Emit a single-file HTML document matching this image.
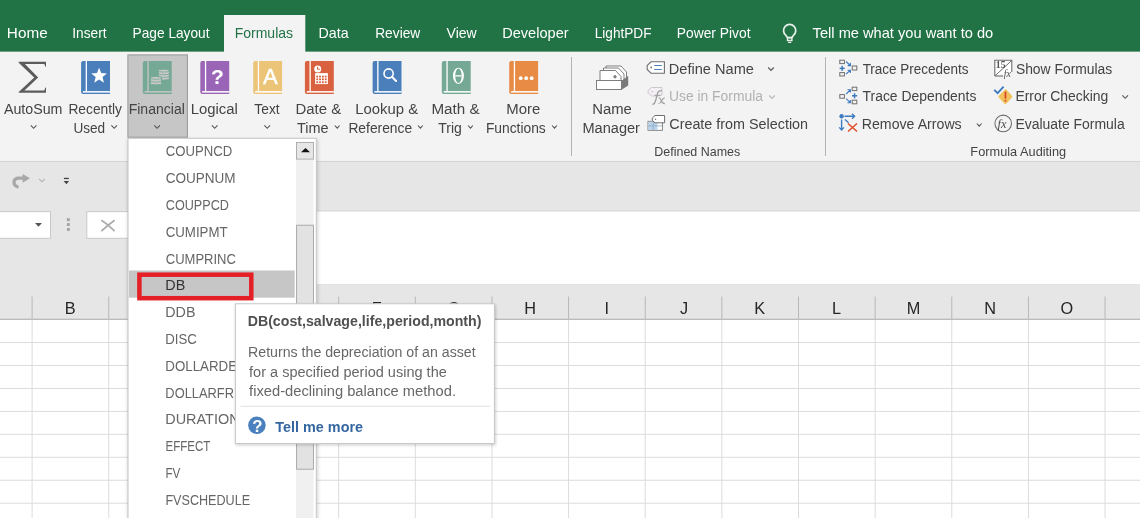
<!DOCTYPE html>
<html><head><meta charset="utf-8"><style>
html,body{margin:0;padding:0;width:1140px;height:518px;overflow:hidden;background:#fff}
svg{display:block;will-change:transform}
text{font-family:"Liberation Sans", sans-serif;white-space:pre}
</style></head><body>
<svg width="1140" height="518" viewBox="0 0 1140 518">
<rect x="0" y="0" width="1140" height="518" fill="#ffffff"/>
<rect x="0" y="0" width="1140" height="51.8" fill="#217346"/>
<rect x="0" y="51.8" width="1140" height="110" fill="#f3f3f3"/>
<rect x="224" y="15" width="81.3" height="37" fill="#f3f3f3"/>
<rect x="0" y="161" width="1140" height="1" fill="#d4d4d4"/>
<rect x="0" y="162" width="1140" height="49.5" fill="#e6e6e6"/>
<rect x="0" y="211.5" width="1140" height="73" fill="#ffffff"/>
<rect x="0" y="205" width="250" height="80" fill="#e6e6e6"/>
<rect x="-1" y="211.6" width="51.5" height="26.7" fill="#ffffff" stroke="#c8c8c8" stroke-width="1"/>
<path d="M35 223 L42 223 L38.5 226.8 Z" fill="#555"/>
<g fill="#a4a4a4"><rect x="66.9" y="218.2" width="2.9" height="2.9"/><rect x="66.9" y="223.1" width="2.9" height="2.9"/><rect x="66.9" y="228.0" width="2.9" height="2.9"/></g>
<rect x="86.8" y="211.6" width="60" height="26.7" fill="#ffffff" stroke="#c8c8c8" stroke-width="1"/>
<path d="M101.3 220.2 Q107 223.5 114.6 231.2 M114.6 220.2 Q108 225 101.3 231.2" fill="none" stroke="#acacac" stroke-width="1.7"/>
<rect x="250" y="284.3" width="890" height="1" fill="#d4d4d4"/>
<rect x="250" y="210.4" width="890" height="1" fill="#d8d8d8"/>
<rect x="0" y="284.8" width="1140" height="34.5" fill="#e6e6e6"/>
<rect x="0" y="318.77" width="1140" height="1" fill="#a9a9a9"/>
<path d="M18.6 187.2 Q14.2 186.2 14 182.5 Q14 178.2 19 178.2 L23.5 178.2" fill="none" stroke="#a8a8a8" stroke-width="3.3"/>
<path d="M22.6 173.9 L30 178.2 L22.6 182.8 Z" fill="#a8a8a8"/>
<path d="M39.20 179.00 L42.00 181.80 L44.80 179.00" fill="none" stroke="#b4b4b4" stroke-width="1.1"/>
<rect x="63.9" y="177.8" width="4.9" height="1.3" fill="#444"/><path d="M63.7 181 L69.1 181 L66.4 184.2 Z" fill="#444"/>
<rect x="31.60" y="296.5" width="1" height="22.5" fill="#b8b8b8"/><rect x="31.60" y="319.8" width="1" height="200" fill="#dcdcdc"/><rect x="108.24" y="296.5" width="1" height="22.5" fill="#b8b8b8"/><rect x="108.24" y="319.8" width="1" height="200" fill="#dcdcdc"/><rect x="184.88" y="296.5" width="1" height="22.5" fill="#b8b8b8"/><rect x="184.88" y="319.8" width="1" height="200" fill="#dcdcdc"/><rect x="261.52" y="296.5" width="1" height="22.5" fill="#b8b8b8"/><rect x="261.52" y="319.8" width="1" height="200" fill="#dcdcdc"/><rect x="338.16" y="296.5" width="1" height="22.5" fill="#b8b8b8"/><rect x="338.16" y="319.8" width="1" height="200" fill="#dcdcdc"/><rect x="414.80" y="296.5" width="1" height="22.5" fill="#b8b8b8"/><rect x="414.80" y="319.8" width="1" height="200" fill="#dcdcdc"/><rect x="491.44" y="296.5" width="1" height="22.5" fill="#b8b8b8"/><rect x="491.44" y="319.8" width="1" height="200" fill="#dcdcdc"/><rect x="568.08" y="296.5" width="1" height="22.5" fill="#b8b8b8"/><rect x="568.08" y="319.8" width="1" height="200" fill="#dcdcdc"/><rect x="644.72" y="296.5" width="1" height="22.5" fill="#b8b8b8"/><rect x="644.72" y="319.8" width="1" height="200" fill="#dcdcdc"/><rect x="721.36" y="296.5" width="1" height="22.5" fill="#b8b8b8"/><rect x="721.36" y="319.8" width="1" height="200" fill="#dcdcdc"/><rect x="798.00" y="296.5" width="1" height="22.5" fill="#b8b8b8"/><rect x="798.00" y="319.8" width="1" height="200" fill="#dcdcdc"/><rect x="874.64" y="296.5" width="1" height="22.5" fill="#b8b8b8"/><rect x="874.64" y="319.8" width="1" height="200" fill="#dcdcdc"/><rect x="951.28" y="296.5" width="1" height="22.5" fill="#b8b8b8"/><rect x="951.28" y="319.8" width="1" height="200" fill="#dcdcdc"/><rect x="1027.92" y="296.5" width="1" height="22.5" fill="#b8b8b8"/><rect x="1027.92" y="319.8" width="1" height="200" fill="#dcdcdc"/><rect x="1104.56" y="296.5" width="1" height="22.5" fill="#b8b8b8"/><rect x="1104.56" y="319.8" width="1" height="200" fill="#dcdcdc"/><rect x="1181.20" y="296.5" width="1" height="22.5" fill="#b8b8b8"/><rect x="1181.20" y="319.8" width="1" height="200" fill="#dcdcdc"/><rect x="0" y="342.05" width="1140" height="1" fill="#dcdcdc"/><rect x="0" y="365.00" width="1140" height="1" fill="#dcdcdc"/><rect x="0" y="387.95" width="1140" height="1" fill="#dcdcdc"/><rect x="0" y="410.90" width="1140" height="1" fill="#dcdcdc"/><rect x="0" y="433.85" width="1140" height="1" fill="#dcdcdc"/><rect x="0" y="456.80" width="1140" height="1" fill="#dcdcdc"/><rect x="0" y="479.75" width="1140" height="1" fill="#dcdcdc"/><rect x="0" y="502.70" width="1140" height="1" fill="#dcdcdc"/>
<text x="64.76" y="314.30" font-size="16.3" fill="#262626">B</text>
<text x="141.07" y="314.30" font-size="16.3" fill="#262626">C</text>
<text x="217.55" y="314.30" font-size="16.3" fill="#262626">D</text>
<text x="294.59" y="314.30" font-size="16.3" fill="#262626">E</text>
<text x="371.64" y="314.30" font-size="16.3" fill="#262626">F</text>
<text x="447.47" y="314.30" font-size="16.3" fill="#262626">G</text>
<text x="524.35" y="314.30" font-size="16.3" fill="#262626">H</text>
<text x="604.62" y="314.30" font-size="16.3" fill="#262626">I</text>
<text x="679.91" y="314.30" font-size="16.3" fill="#262626">J</text>
<text x="754.15" y="314.30" font-size="16.3" fill="#262626">K</text>
<text x="831.89" y="314.30" font-size="16.3" fill="#262626">L</text>
<text x="906.65" y="314.30" font-size="16.3" fill="#262626">M</text>
<text x="984.19" y="314.30" font-size="16.3" fill="#262626">N</text>
<text x="1060.42" y="314.30" font-size="16.3" fill="#262626">O</text>
<rect x="571" y="57" width="1" height="99" fill="#b4b4b4"/>
<rect x="825" y="57" width="1" height="99" fill="#b4b4b4"/>
<rect x="127.9" y="54.9" width="59.5" height="82.3" fill="#c6c6c6" stroke="#9c9c9c" stroke-width="1.1"/>
<text x="6.88" y="38.10" font-size="15.0" fill="#ffffff" textLength="40.75" lengthAdjust="spacingAndGlyphs">Home</text>
<text x="72.26" y="38.10" font-size="15.0" fill="#ffffff" textLength="34.38" lengthAdjust="spacingAndGlyphs">Insert</text>
<text x="132.60" y="38.10" font-size="15.0" fill="#ffffff" textLength="76.93" lengthAdjust="spacingAndGlyphs">Page Layout</text>
<text x="234.68" y="38.10" font-size="15.0" fill="#217346" textLength="58.41" lengthAdjust="spacingAndGlyphs">Formulas</text>
<text x="318.56" y="38.10" font-size="15.0" fill="#ffffff" textLength="30.08" lengthAdjust="spacingAndGlyphs">Data</text>
<text x="375.20" y="38.10" font-size="15.0" fill="#ffffff" textLength="45.06" lengthAdjust="spacingAndGlyphs">Review</text>
<text x="446.60" y="38.10" font-size="15.0" fill="#ffffff" textLength="30.16" lengthAdjust="spacingAndGlyphs">View</text>
<text x="502.24" y="38.10" font-size="15.0" fill="#ffffff" textLength="66.35" lengthAdjust="spacingAndGlyphs">Developer</text>
<text x="594.71" y="38.10" font-size="15.0" fill="#ffffff" textLength="56.78" lengthAdjust="spacingAndGlyphs">LightPDF</text>
<text x="676.79" y="38.10" font-size="15.0" fill="#ffffff" textLength="73.74" lengthAdjust="spacingAndGlyphs">Power Pivot</text>
<text x="812.61" y="38.10" font-size="15.0" fill="#ffffff" textLength="180.59" lengthAdjust="spacingAndGlyphs">Tell me what you want to do</text>
<path d="M787.4 37.6 L785.73 35.22 A6.1 6.1 0 1 1 793.57 35.22 L791.9 37.6 Z" fill="none" stroke="#e8f0ea" stroke-width="1.7" stroke-linejoin="round"/>
<rect x="787.5" y="37.6" width="4.4" height="2.9" fill="none" stroke="#e8f0ea" stroke-width="1.4"/><rect x="788.1" y="41.8" width="3.2" height="1.2" fill="#e8f0ea"/>
<text x="3.90" y="113.80" font-size="15.4" fill="#444444" textLength="58.50" lengthAdjust="spacingAndGlyphs">AutoSum</text>
<text x="68.40" y="113.80" font-size="15.4" fill="#444444" textLength="53.60" lengthAdjust="spacingAndGlyphs">Recently</text>
<text x="73.38" y="132.60" font-size="15.4" fill="#444444" textLength="31.75" lengthAdjust="spacingAndGlyphs">Used</text>
<text x="128.68" y="113.80" font-size="15.4" fill="#444444" textLength="56.20" lengthAdjust="spacingAndGlyphs">Financial</text>
<text x="190.71" y="113.80" font-size="15.4" fill="#444444" textLength="47.22" lengthAdjust="spacingAndGlyphs">Logical</text>
<text x="254.32" y="113.80" font-size="15.4" fill="#444444" textLength="25.32" lengthAdjust="spacingAndGlyphs">Text</text>
<text x="295.50" y="113.80" font-size="15.4" fill="#444444" textLength="45.67" lengthAdjust="spacingAndGlyphs">Date &amp;</text>
<text x="296.91" y="132.60" font-size="15.4" fill="#444444" textLength="31.58" lengthAdjust="spacingAndGlyphs">Time</text>
<text x="355.21" y="113.80" font-size="15.4" fill="#444444" textLength="62.87" lengthAdjust="spacingAndGlyphs">Lookup &amp;</text>
<text x="348.39" y="132.60" font-size="15.4" fill="#444444" textLength="63.77" lengthAdjust="spacingAndGlyphs">Reference</text>
<text x="431.38" y="113.80" font-size="15.4" fill="#444444" textLength="48.20" lengthAdjust="spacingAndGlyphs">Math &amp;</text>
<text x="438.22" y="132.60" font-size="15.4" fill="#444444" textLength="23.64" lengthAdjust="spacingAndGlyphs">Trig</text>
<text x="506.21" y="113.80" font-size="15.4" fill="#444444" textLength="34.01" lengthAdjust="spacingAndGlyphs">More</text>
<text x="485.89" y="132.60" font-size="15.4" fill="#444444" textLength="59.89" lengthAdjust="spacingAndGlyphs">Functions</text>
<text x="592.21" y="114.00" font-size="15.4" fill="#444444" textLength="39.60" lengthAdjust="spacingAndGlyphs">Name</text>
<text x="582.43" y="132.70" font-size="15.4" fill="#444444" textLength="57.56" lengthAdjust="spacingAndGlyphs">Manager</text>
<text x="668.83" y="73.70" font-size="15.4" fill="#444444" textLength="85.07" lengthAdjust="spacingAndGlyphs">Define Name</text>
<text x="668.96" y="101.20" font-size="15.4" fill="#b1b1b1" textLength="93.99" lengthAdjust="spacingAndGlyphs">Use in Formula</text>
<text x="669.28" y="129.20" font-size="15.4" fill="#444444" textLength="138.80" lengthAdjust="spacingAndGlyphs">Create from Selection</text>
<text x="654.30" y="155.70" font-size="12.2" fill="#444444" textLength="85.93" lengthAdjust="spacingAndGlyphs">Defined Names</text>
<text x="862.63" y="73.80" font-size="15.4" fill="#444444" textLength="105.94" lengthAdjust="spacingAndGlyphs">Trace Precedents</text>
<text x="862.62" y="101.40" font-size="15.4" fill="#444444" textLength="113.76" lengthAdjust="spacingAndGlyphs">Trace Dependents</text>
<text x="861.78" y="129.20" font-size="15.4" fill="#444444" textLength="99.92" lengthAdjust="spacingAndGlyphs">Remove Arrows</text>
<text x="1015.88" y="73.80" font-size="15.4" fill="#444444" textLength="96.41" lengthAdjust="spacingAndGlyphs">Show Formulas</text>
<text x="1015.39" y="101.40" font-size="15.4" fill="#444444" textLength="92.87" lengthAdjust="spacingAndGlyphs">Error Checking</text>
<text x="1015.38" y="129.20" font-size="15.4" fill="#444444" textLength="109.36" lengthAdjust="spacingAndGlyphs">Evaluate Formula</text>
<text x="970.39" y="155.90" font-size="12.2" fill="#444444" textLength="95.79" lengthAdjust="spacingAndGlyphs">Formula Auditing</text>
<path d="M30.80 125.30 L33.60 128.30 L36.40 125.30" fill="none" stroke="#555" stroke-width="1.1"/>
<path d="M111.40 125.30 L114.20 128.30 L117.00 125.30" fill="none" stroke="#555" stroke-width="1.1"/>
<path d="M154.30 125.30 L157.10 128.30 L159.90 125.30" fill="none" stroke="#555" stroke-width="1.1"/>
<path d="M211.90 125.30 L214.70 128.30 L217.50 125.30" fill="none" stroke="#555" stroke-width="1.1"/>
<path d="M264.40 125.30 L267.20 128.30 L270.00 125.30" fill="none" stroke="#555" stroke-width="1.1"/>
<path d="M334.80 125.50 L337.20 128.10 L339.60 125.50" fill="none" stroke="#555" stroke-width="1.1"/>
<path d="M418.00 125.50 L420.40 128.10 L422.80 125.50" fill="none" stroke="#555" stroke-width="1.1"/>
<path d="M468.10 125.50 L470.50 128.10 L472.90 125.50" fill="none" stroke="#555" stroke-width="1.1"/>
<path d="M552.10 125.50 L554.50 128.10 L556.90 125.50" fill="none" stroke="#555" stroke-width="1.1"/>
<path d="M768.20 67.50 L771.00 70.50 L773.80 67.50" fill="none" stroke="#555" stroke-width="1.1"/>
<path d="M769.20 95.50 L772.00 98.50 L774.80 95.50" fill="none" stroke="#b8b8b8" stroke-width="1.1"/>
<path d="M976.80 123.50 L979.20 126.10 L981.60 123.50" fill="none" stroke="#555" stroke-width="1.1"/>
<path d="M1122.40 95.30 L1125.20 98.30 L1128.00 95.30" fill="none" stroke="#555" stroke-width="1.1"/>
<path d="M18.7 61.8 H46 V66.8 H45.4 L44.3 63.9 H24.9 L38.2 77.4 L24.4 90.5 H44.3 L45.4 87.6 H46 V92.8 H18.7 V92 L34.2 77.4 L18.7 62.7 Z" fill="#5c5c5c"/>
<path d="M83.1 61.0 H110.0 V94.0 H83.1 Q81.1 94.0 81.1 92.0 V63.0 Q81.1 61.0 83.1 61.0 Z" fill="#4b7fbc"/><rect x="85.69999999999999" y="61.0" width="1.3" height="30.1" fill="#fff"/><rect x="82.89999999999999" y="91.1" width="27.099999999999998" height="1.5" fill="#fff"/><g transform="translate(81.1,61.0)"><polygon points="18.00,6.80 20.12,12.09 25.80,12.47 21.42,16.11 22.82,21.63 18.00,18.60 13.18,21.63 14.58,16.11 10.20,12.47 15.88,12.09" fill="#fff"/></g>
<path d="M144.8 61.0 H171.70000000000002 V94.0 H144.8 Q142.8 94.0 142.8 92.0 V63.0 Q142.8 61.0 144.8 61.0 Z" fill="#75a996"/><rect x="147.4" y="61.0" width="1.3" height="30.1" fill="#c6c6c6"/><rect x="144.60000000000002" y="91.1" width="27.099999999999998" height="1.5" fill="#c6c6c6"/><g transform="translate(142.8,61.0)"><path d="M15.5 9.6 A5.5 1.5 0 0 1 26.5 9.6 V17.6 A5.5 1.5 0 0 1 15.5 17.6 Z" fill="#c8c8c8" stroke="#75a996" stroke-width="1"/><path d="M15.5 9.6 A5.5 1.5 0 0 0 26.5 9.6" fill="none" stroke="#75a996" stroke-width="0.8"/><path d="M15.5 12.27 A5.5 1.5 0 0 0 26.5 12.27" fill="none" stroke="#75a996" stroke-width="0.8"/><path d="M15.5 14.93 A5.5 1.5 0 0 0 26.5 14.93" fill="none" stroke="#75a996" stroke-width="0.8"/><path d="M7.699999999999999 16.8 A5.5 1.5 0 0 1 18.7 16.8 V22.4 A5.5 1.5 0 0 1 7.699999999999999 22.4 Z" fill="#c8c8c8" stroke="#75a996" stroke-width="1"/><path d="M7.699999999999999 16.8 A5.5 1.5 0 0 0 18.7 16.8" fill="none" stroke="#75a996" stroke-width="0.8"/><path d="M7.699999999999999 19.60 A5.5 1.5 0 0 0 18.7 19.60" fill="none" stroke="#75a996" stroke-width="0.8"/></g>
<path d="M202.3 61.0 H229.20000000000002 V94.0 H202.3 Q200.3 94.0 200.3 92.0 V63.0 Q200.3 61.0 202.3 61.0 Z" fill="#9a65b7"/><rect x="204.9" y="61.0" width="1.3" height="30.1" fill="#fff"/><rect x="202.10000000000002" y="91.1" width="27.099999999999998" height="1.5" fill="#fff"/><g transform="translate(200.3,61.0)"><text x="17.2" y="23.2" font-size="21" font-weight="bold" fill="#fff" text-anchor="middle">?</text></g>
<path d="M255.2 61.0 H282.09999999999997 V94.0 H255.2 Q253.2 94.0 253.2 92.0 V63.0 Q253.2 61.0 255.2 61.0 Z" fill="#ecc477"/><rect x="257.8" y="61.0" width="1.3" height="30.1" fill="#fff"/><rect x="255.0" y="91.1" width="27.099999999999998" height="1.5" fill="#fff"/><g transform="translate(253.2,61.0)"><text x="17.1" y="23.1" font-size="22" fill="#fff" stroke="#fff" stroke-width="0.5" text-anchor="middle">A</text></g>
<path d="M306.9 61.0 H333.79999999999995 V94.0 H306.9 Q304.9 94.0 304.9 92.0 V63.0 Q304.9 61.0 306.9 61.0 Z" fill="#d96140"/><rect x="309.5" y="61.0" width="1.3" height="30.1" fill="#fff"/><rect x="306.7" y="91.1" width="27.099999999999998" height="1.5" fill="#fff"/><g transform="translate(304.9,61.0)"><circle cx="12.8" cy="7.9" r="3.5" fill="#fff"/><path d="M12.6 5.8 V8.2 H15" stroke="#d96140" stroke-width="1" fill="none"/><rect x="10.2" y="12.1" width="12.8" height="11" fill="#fff"/><rect x="11.40" y="14.70" width="1.8" height="1.8" fill="#d96140"/><rect x="11.40" y="17.40" width="1.8" height="1.8" fill="#d96140"/><rect x="11.40" y="20.30" width="1.8" height="1.8" fill="#d96140"/><rect x="14.20" y="14.70" width="1.8" height="1.8" fill="#d96140"/><rect x="14.20" y="17.40" width="1.8" height="1.8" fill="#d96140"/><rect x="14.20" y="20.30" width="1.8" height="1.8" fill="#d96140"/><rect x="17.10" y="14.70" width="1.8" height="1.8" fill="#d96140"/><rect x="17.10" y="17.40" width="1.8" height="1.8" fill="#d96140"/><rect x="17.10" y="20.30" width="1.8" height="1.8" fill="#d96140"/><rect x="19.90" y="14.70" width="1.8" height="1.8" fill="#d96140"/><rect x="19.90" y="17.40" width="1.8" height="1.8" fill="#d96140"/><rect x="19.90" y="20.30" width="1.8" height="1.8" fill="#d96140"/></g>
<path d="M374.6 61.0 H401.5 V94.0 H374.6 Q372.6 94.0 372.6 92.0 V63.0 Q372.6 61.0 374.6 61.0 Z" fill="#4b7fbc"/><rect x="377.20000000000005" y="61.0" width="1.3" height="30.1" fill="#fff"/><rect x="374.40000000000003" y="91.1" width="27.099999999999998" height="1.5" fill="#fff"/><g transform="translate(372.6,61.0)"><circle cx="16" cy="12.5" r="4.6" fill="none" stroke="#fff" stroke-width="1.6"/><path d="M19.3 15.8 L23.5 20" stroke="#fff" stroke-width="2" stroke-linecap="round"/></g>
<path d="M443.8 61.0 H470.7 V94.0 H443.8 Q441.8 94.0 441.8 92.0 V63.0 Q441.8 61.0 443.8 61.0 Z" fill="#75a996"/><rect x="446.40000000000003" y="61.0" width="1.3" height="30.1" fill="#fff"/><rect x="443.6" y="91.1" width="27.099999999999998" height="1.5" fill="#fff"/><g transform="translate(441.8,61.0)"><path fill-rule="evenodd" fill="#fff" d="M16.65 6.7 A5.45 8.1 0 1 1 16.65 22.9 A5.45 8.1 0 1 1 16.65 6.7 Z M16.65 7.6 A3.2 7.2 0 1 0 16.65 22.0 A3.2 7.2 0 1 0 16.65 7.6 Z"/><rect x="13.6" y="14.2" width="6.1" height="1.3" fill="#fff"/></g>
<path d="M511.2 61.0 H538.1 V94.0 H511.2 Q509.2 94.0 509.2 92.0 V63.0 Q509.2 61.0 511.2 61.0 Z" fill="#e88b45"/><rect x="513.8" y="61.0" width="1.3" height="30.1" fill="#fff"/><rect x="511.0" y="91.1" width="27.099999999999998" height="1.5" fill="#fff"/><g transform="translate(509.2,61.0)"><circle cx="11.5" cy="17.2" r="1.9" fill="#fff"/><circle cx="17" cy="17.2" r="1.9" fill="#fff"/><circle cx="22.5" cy="17.2" r="1.9" fill="#fff"/></g>
<g stroke="#787878" stroke-width="0.95" fill="#fff"><path d="M606 66 H621 L626.5 72 V80 H606 Z"/><path d="M603.5 68 H618.5 L624 74 V81 H603.5 Z"/><path d="M600 70.5 H615.5 L621 76.5 V81 H600 Z"/><circle cx="615" cy="76.8" r="1.2" fill="#888"/><rect x="596.5" y="80.5" width="25" height="9"/></g><path d="M622 80.5 L628.2 75.8 V85.5 L622 89.5 Z" fill="#7a7a7a"/>
<path d="M651 61.8 H664.4 V73.2 H651 L647.2 69.5 V65.5 Z" fill="#fff" stroke="#6e6e6e" stroke-width="1.1"/><circle cx="651.2" cy="67.5" r="0.9" fill="#777"/><rect x="654.2" y="65" width="7.6" height="1" fill="#4a7fbd"/><rect x="654.2" y="69" width="7.6" height="1" fill="#4a7fbd"/>
<path d="M651.5 87.5 H662 V95 L658 96 H651.5 L648 92.8 V90.5 Z" fill="#f4eff4" stroke="#c9c9c9" stroke-width="1"/><circle cx="652.3" cy="91.5" r="0.8" fill="#bbb"/><path d="M652.4 104.2 Q654.8 104.4 655.8 100 L657.6 93.2 Q658.4 90.4 661.9 90.7" fill="none" stroke="#a0a0a0" stroke-width="1.35"/><path d="M654.6 95.3 H660.2" stroke="#a0a0a0" stroke-width="1.1"/><path d="M658.8 97.9 Q660 97.6 661.2 100.5 Q662.3 103.8 664.9 103.6 M664.6 97.9 Q663 98.3 661.6 100.8 Q660.3 103.8 658.4 103.8" fill="none" stroke="#a0a0a0" stroke-width="1.1"/>
<rect x="648" y="121.3" width="14.4" height="9" fill="#fff" stroke="#7a7a7a" stroke-width="0.9"/><rect x="648.4" y="121.7" width="9" height="8.2" fill="#b9d3ea"/><g fill="#8ea9c4"><rect x="652.8" y="121.5" width="0.8" height="8.6"/><rect x="648.2" y="125.5" width="14" height="0.8"/></g><path d="M655 115.5 H664.6 V122.8 H655 L652.3 120.3 V118 Z" fill="#fff" stroke="#6e6e6e" stroke-width="1"/><circle cx="655.5" cy="119.2" r="0.8" fill="#777"/>
<g fill="none" stroke="#6e6e6e" stroke-width="1"><rect x="839.8" y="60.2" width="4.6" height="3.4"/><rect x="839.8" y="72.6" width="4.6" height="3.4"/><rect x="852.2" y="66" width="4.6" height="4"/></g><g fill="#3f7bc0"><rect x="839.6" y="67.6" width="5.2" height="1.5"/><rect x="841.4" y="65.8" width="1.5" height="5.1"/></g><g stroke="#3f7bc0" stroke-width="1.1" fill="none"><path d="M846 61.5 L850.3 65.5 M847.6 65.6 H850.4 V62.8"/><path d="M846 74 L850.3 70.3 M847.6 70.2 H850.4 V73"/></g>
<g fill="none" stroke="#6e6e6e" stroke-width="1"><rect x="839.8" y="94.6" width="4.6" height="3.6"/><rect x="852.2" y="87.2" width="4.6" height="3.4"/><rect x="852.2" y="100.2" width="4.6" height="3.6"/></g><g fill="#3f7bc0"><rect x="852" y="95" width="5.2" height="1.5"/><rect x="853.8" y="93.2" width="1.5" height="5.1"/></g><g stroke="#3f7bc0" stroke-width="1.1" fill="none"><path d="M846.2 94 L850.3 89.8 M847.5 89.7 H850.4 V92.5"/><path d="M846.2 98.6 L850.3 102.6 M847.5 102.7 H850.4 V99.9"/></g>
<circle cx="841.6" cy="116.3" r="2.2" fill="#3f7bc0"/><g stroke="#3f7bc0" stroke-width="1.4" fill="none"><path d="M844.5 116.3 H854.5 M852 113.8 L854.6 116.3 L852 118.8"/><path d="M841.6 119.5 V130 M839.2 127.4 L841.6 130 L844 127.4"/><path d="M845 119.5 L848.5 122.8"/></g><path d="M848 123.5 L857 131.5 M857 123.5 L848 131.5" stroke="#e0502e" stroke-width="1.6"/>
<path d="M994.8 76 V60.3 H1011.8 V72" fill="#fff" stroke="#6e6e6e" stroke-width="1.1"/><path d="M994.8 76 H1003" stroke="#6e6e6e" stroke-width="1.1"/><path d="M995 75.8 L1011.6 60.6" stroke="#6e6e6e" stroke-width="1"/><text x="995.8" y="68.3" font-size="9.8" font-weight="bold" fill="#555" style="font-family:'Liberation Serif',serif">15</text><text x="1003.8" y="76.6" font-size="10" font-style="italic" fill="#555" style="font-family:'Liberation Serif',serif">fx</text>
<path d="M994.2 89.8 L997.6 93.2 L1003.6 86.6" fill="none" stroke="#3f7bc0" stroke-width="1.9"/><path d="M1005.4 89.2 Q1005.4 88.6 1006.2 89.4 L1012 95.8 Q1012.7 96.6 1012 97.4 L1006.2 103.8 Q1005.4 104.6 1004.6 103.8 L998.8 97.4 Q998.1 96.6 998.8 95.8 Z" fill="#f0c15c"/><rect x="1004.6" y="91.6" width="1.7" height="7" fill="#d9442a"/><rect x="1004.6" y="99.8" width="1.7" height="1.7" fill="#d9442a"/>
<circle cx="1003.2" cy="123.4" r="8.3" fill="none" stroke="#6e6e6e" stroke-width="1.05"/><text x="997.6" y="127.8" font-size="12.5" font-style="italic" fill="#505050" style="font-family:'Liberation Serif',serif">fx</text>
<defs><filter id="sh" x="-10%" y="-10%" width="130%" height="130%"><feGaussianBlur stdDeviation="1.6"/></filter></defs>
<rect x="127" y="139" width="191.5" height="400" fill="#000" opacity="0.13" filter="url(#sh)"/>
<rect x="128" y="138.3" width="188.3" height="400" fill="#ffffff" stroke="#c6c6c6" stroke-width="1"/>
<rect x="296.1" y="142" width="17.4" height="380" fill="#f0f0f0"/>
<rect x="296.5" y="142.4" width="17" height="16.7" fill="#e6e6e6" stroke="#a8a8a8" stroke-width="0.9"/>
<path d="M301 152.3 L305.5 148 L310 152.3 Z" fill="#111"/>
<rect x="296.6" y="225.2" width="16.9" height="244" fill="#e2e2e2" stroke="#a4a4a4" stroke-width="0.9"/>
<rect x="129" y="270.5" width="165.7" height="27.2" fill="#c6c6c6"/>
<text x="165.74" y="156.40" font-size="15.4" fill="#666666" textLength="66.48" lengthAdjust="spacingAndGlyphs">COUPNCD</text>
<text x="165.72" y="183.20" font-size="15.4" fill="#666666" textLength="69.93" lengthAdjust="spacingAndGlyphs">COUPNUM</text>
<text x="165.77" y="210.00" font-size="15.4" fill="#666666" textLength="63.13" lengthAdjust="spacingAndGlyphs">COUPPCD</text>
<text x="165.74" y="236.80" font-size="15.4" fill="#666666" textLength="61.84" lengthAdjust="spacingAndGlyphs">CUMIPMT</text>
<text x="165.75" y="263.60" font-size="15.4" fill="#666666" textLength="70.13" lengthAdjust="spacingAndGlyphs">CUMPRINC</text>
<text x="165.25" y="290.40" font-size="15.4" fill="#333333" textLength="20.00" lengthAdjust="spacingAndGlyphs">DB</text>
<text x="165.26" y="317.20" font-size="15.4" fill="#666666" textLength="30.19" lengthAdjust="spacingAndGlyphs">DDB</text>
<text x="165.34" y="344.00" font-size="15.4" fill="#666666" textLength="31.55" lengthAdjust="spacingAndGlyphs">DISC</text>
<text x="165.34" y="370.80" font-size="15.4" fill="#666666" textLength="71.72" lengthAdjust="spacingAndGlyphs">DOLLARDE</text>
<text x="165.37" y="397.60" font-size="15.4" fill="#666666" textLength="68.57" lengthAdjust="spacingAndGlyphs">DOLLARFR</text>
<text x="165.24" y="424.40" font-size="15.4" fill="#666666" textLength="74.37" lengthAdjust="spacingAndGlyphs">DURATION</text>
<text x="165.48" y="451.20" font-size="15.4" fill="#666666" textLength="44.76" lengthAdjust="spacingAndGlyphs">EFFECT</text>
<text x="165.46" y="478.00" font-size="15.4" fill="#666666" textLength="14.96" lengthAdjust="spacingAndGlyphs">FV</text>
<text x="165.39" y="504.80" font-size="15.4" fill="#666666" textLength="84.74" lengthAdjust="spacingAndGlyphs">FVSCHEDULE</text>
<rect x="139.4" y="274.7" width="111.9" height="23.5" fill="none" stroke="#e41f26" stroke-width="4.5"/>
<rect x="235.5" y="304.5" width="260.5" height="140.8" fill="#000" opacity="0.18" filter="url(#sh)"/>
<rect x="235.4" y="303.8" width="259.0" height="139.7" fill="#ffffff" stroke="#c8c8c8" stroke-width="1"/>
<text x="247.68" y="326.40" font-size="14.0" fill="#505050" font-weight="bold" textLength="233.80" lengthAdjust="spacingAndGlyphs">DB(cost,salvage,life,period,month)</text>
<text x="248.07" y="357.30" font-size="14.0" fill="#676767" textLength="227.57" lengthAdjust="spacingAndGlyphs">Returns the depreciation of an asset</text>
<text x="249.05" y="376.60" font-size="14.0" fill="#676767" textLength="197.74" lengthAdjust="spacingAndGlyphs">for a specified period using the</text>
<text x="249.05" y="396.00" font-size="14.0" fill="#676767" textLength="206.94" lengthAdjust="spacingAndGlyphs">fixed-declining balance method.</text>
<text x="275.36" y="432.00" font-size="14.6" fill="#3466a2" font-weight="bold" textLength="87.69" lengthAdjust="spacingAndGlyphs">Tell me more</text>
<rect x="240.5" y="405.8" width="249.5" height="1" fill="#e0e0e0"/>
<circle cx="256.9" cy="425.2" r="8.75" fill="#4a80bd"/>
<text x="257.3" y="431.5" font-size="16.8" font-weight="bold" fill="#fff" text-anchor="middle">?</text>
</svg></body></html>
